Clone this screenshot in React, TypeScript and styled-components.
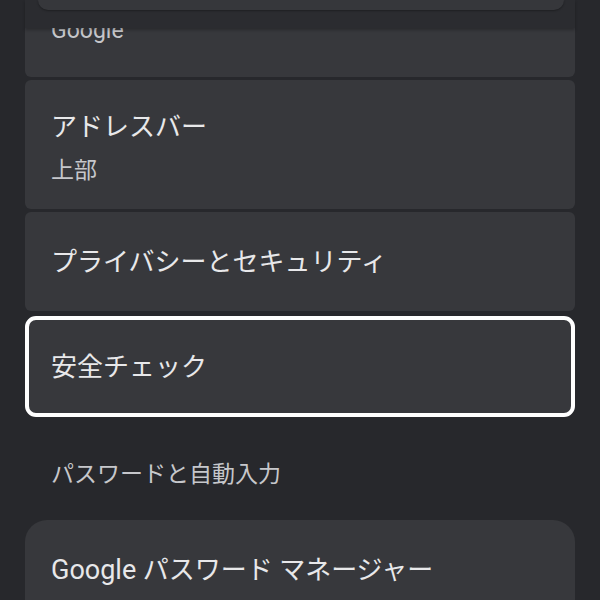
import React from 'react';
import styled, { createGlobalStyle } from 'styled-components';

const GlobalStyle = createGlobalStyle`
  html, body {
    margin: 0;
    padding: 0;
    background-color: #27282c;
  }
  body {
    font-family: Roboto, "Noto Sans CJK JP", "Noto Sans", sans-serif;
    -webkit-font-smoothing: antialiased;
  }
`;

const Screen = styled.div`
  width: 600px;
  height: 600px;
  overflow: hidden;
  background-color: #27282c;
`;

const Column = styled.div`
  display: flex;
  flex-direction: column;
  padding: 0 25px;
`;

const TopBand = styled.div`
  height: 28px;
  background-color: #2b2c30;
  box-shadow: 0 2px 3px rgba(0, 0, 0, 0.25);
  position: relative;
  z-index: 1;
`;

const TopPill = styled.div`
  height: 10px;
  margin: 0 11px 0 13px;
  background-color: #36373b;
  border-radius: 0 0 24px 24px;
  box-shadow: 0 1px 2px rgba(0, 0, 0, 0.3);
`;

const Card = styled.div<{ $top?: boolean; $gap?: number; $height: number; $shift?: number }>`
  display: flex;
  flex-direction: column;
  justify-content: center;
  box-sizing: border-box;
  height: ${(p) => p.$height}px;
  margin-top: ${(p) => p.$gap ?? 3}px;
  padding: ${(p) => p.$shift ?? 0}px 26px 0;
  background-color: #37383c;
  border-radius: ${(p) => (p.$top ? '22px 22px 6px 6px' : '6px')};
  overflow: hidden;
`;

const ClippedCard = styled(Card)`
  justify-content: flex-start;
  border-radius: 0 0 6px 6px;
`;

const HighlightCard = styled(Card)`
  border: 4px solid #ffffff;
  border-radius: 11px;
  padding: 0 22px;
`;

const Title = styled.div`
  font-size: 26px;
  line-height: 34px;
  color: #e8e8ea;
  white-space: nowrap;
`;

const Latin = styled.span`
  font-size: 27px;
`;

const Subtitle = styled.div<{ $clip?: boolean }>`
  font-size: 23px;
  line-height: 30px;
  color: #c6c7cb;
  margin-top: ${(p) => (p.$clip ? '-12px' : '12px')};
  white-space: nowrap;
`;

const SectionHeader = styled.div`
  font-size: 23px;
  line-height: 32px;
  color: #c6c7cb;
  padding: 42px 26px 29px;
`;

export default function App() {
  return (
    <Screen>
      <GlobalStyle />
      <Column>
        <TopBand>
          <TopPill />
        </TopBand>
        <ClippedCard $gap={0} $height={49}>
          <Subtitle $clip>Google</Subtitle>
        </ClippedCard>
        <Card $height={129} $shift={6}>
          <Title>アドレスバー</Title>
          <Subtitle>上部</Subtitle>
        </Card>
        <Card $height={99} $shift={1}>
          <Title>プライバシーとセキュリティ</Title>
        </Card>
        <HighlightCard $gap={5} $height={101}>
          <Title>安全チェック</Title>
        </HighlightCard>
        <SectionHeader>パスワードと自動入力</SectionHeader>
        <Card $top $gap={0} $height={100}>
          <Title>
            <Latin>Google</Latin> パスワード マネージャー
          </Title>
        </Card>
      </Column>
    </Screen>
  );
}
